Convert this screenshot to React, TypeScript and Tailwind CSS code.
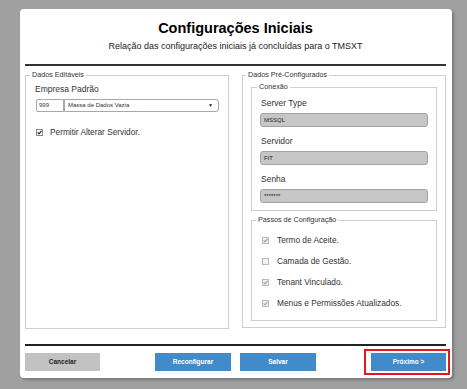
const passos = [
  { label: "Termo de Aceite.", checked: true },
  { label: "Camada de Gestão.", checked: false },
  { label: "Tenant Vinculado.", checked: true },
  { label: "Menus e Permissões Atualizados.", checked: true },
];

const conexao = [
  { label: "Server Type", value: "MSSQL" },
  { label: "Servidor", value: "FIT" },
  { label: "Senha", value: "*******" },
];

function Check({ checked, disabled }: { checked: boolean; disabled?: boolean }) {
  return (
    <span
      className={`w-[7px] h-[7px] border flex items-center justify-center shrink-0 ${
        disabled ? "border-[#b8b8b8] bg-[#f2f2f2]" : "border-[#8a8a8a] bg-white"
      }`}
    >
      {checked && (
        <svg width="5" height="5" viewBox="0 0 5 5">
          <path
            d="M0.6 2.4 L2 3.9 L4.5 0.8"
            fill="none"
            stroke={disabled ? "#a4a4a4" : "#222"}
            strokeWidth="1.2"
          />
        </svg>
      )}
    </span>
  );
}

export default function App() {
  return (
    <div className="min-h-screen bg-[#a0a0a0] pt-[9px] pl-[20px] font-['Liberation_Sans',Arial,sans-serif] text-[#333]">
      <div className="w-[432px] h-[369px] bg-white rounded-[4px] pl-[5px] pr-[6px] flex flex-col shadow-[2px_2px_3px_rgba(0,0,0,0.25)]">
        <div className="h-[55px] flex flex-col items-center pt-[10px]">
          <h1 className="text-[14.5px] leading-[18px] font-bold text-black">Configurações Iniciais</h1>
          <p className="text-[9px] leading-[12px] mt-[3px] text-[#222]">
            Relação das configurações iniciais já concluídas para o TMSXT
          </p>
        </div>
        <div className="h-[2px] bg-[#333]" />

        <div className="h-[278px] grid grid-cols-[204px_204px] gap-[13px]">
          <fieldset className="mt-[3px] h-[260px] border border-[#cfcfcf] px-[9px]">
            <legend className="text-[7.2px] leading-[12px] px-[2px] -ml-[5px]">Dados Editáveis</legend>
            <div className="text-[8.5px] leading-[14px] mt-[1px]">Empresa Padrão</div>
            <div className="flex mt-[3px] h-[13px] ml-[1px]">
              <div className="w-[28px] border border-[#a8a8a8] rounded-l-[2px] text-[6px] leading-[11px] pl-[2px]">
                999
              </div>
              <div className="w-[155px] border border-[#a8a8a8] rounded-r-[3px] text-[6px] leading-[11px] pl-[3px] pr-[5px] flex items-center justify-between">
                <span>Massa de Dados Vazia</span>
                <span className="text-[5px] text-[#222]">▼</span>
              </div>
            </div>
            <label className="flex items-center gap-[7px] mt-[13px] ml-[1px] text-[8.3px] leading-[14px]">
              <Check checked />
              Permitir Alterar Servidor.
            </label>
          </fieldset>

          <fieldset className="mt-[3px] h-[259px] border border-[#cfcfcf] px-[8px]">
            <legend className="text-[7.2px] leading-[12px] px-[2px] -ml-[5px]">Dados Pré-Configurados</legend>
            <fieldset className="border border-[#cfcfcf] px-[8px] pb-[7px]">
              <legend className="text-[7.2px] leading-[12px] px-[2px] -ml-[3px]">Conexão</legend>
              {conexao.map((c, i) => (
                <div key={c.label} className={i === 0 ? "mt-[3px]" : "mt-[7px]"}>
                  <div className="text-[8.5px] leading-[14px] pl-[1px]">{c.label}</div>
                  <div className="mt-[3px] h-[14px] bg-[#c6c6c6] border border-[#a3a3a3] rounded-[3px] text-[6px] leading-[12px] pl-[3px] text-[#222]">
                    {c.value}
                  </div>
                </div>
              ))}
            </fieldset>
            <fieldset className="mt-[3px] border border-[#cfcfcf] px-[10px] pb-[6px]">
              <legend className="text-[7.2px] leading-[12px] px-[2px] -ml-[6px]">Passos de Configuração</legend>
              <div className="mt-[4px]">
                {passos.map((p) => (
                  <div key={p.label} className="h-[21px] flex items-center gap-[8px] text-[8.3px]">
                    <Check checked={p.checked} disabled />
                    {p.label}
                  </div>
                ))}
              </div>
            </fieldset>
          </fieldset>
        </div>

        <div className="h-[2px] bg-[#222]" />
        <div className="flex items-start pt-[3px]">
          <button className="mt-[4px] w-[75px] h-[18px] bg-[#c2c2c2] text-[#222] text-[6.5px] font-bold">
            Cancelar
          </button>
          <button className="mt-[4px] ml-[55px] w-[76px] h-[18px] bg-[#428bca] text-white text-[6.5px] font-bold">
            Reconfigurar
          </button>
          <button className="mt-[4px] ml-[9px] w-[76px] h-[18px] bg-[#428bca] text-white text-[6.5px] font-bold">
            Salvar
          </button>
          <div className="ml-auto -mr-[4px] border-2 border-[#e8141c] pl-[5px] pr-[2px] py-[2px]">
            <button className="block w-[75px] h-[18px] bg-[#428bca] text-white text-[6.5px] font-bold">
              Próximo &gt;
            </button>
          </div>
        </div>
      </div>
    </div>
  );
}
